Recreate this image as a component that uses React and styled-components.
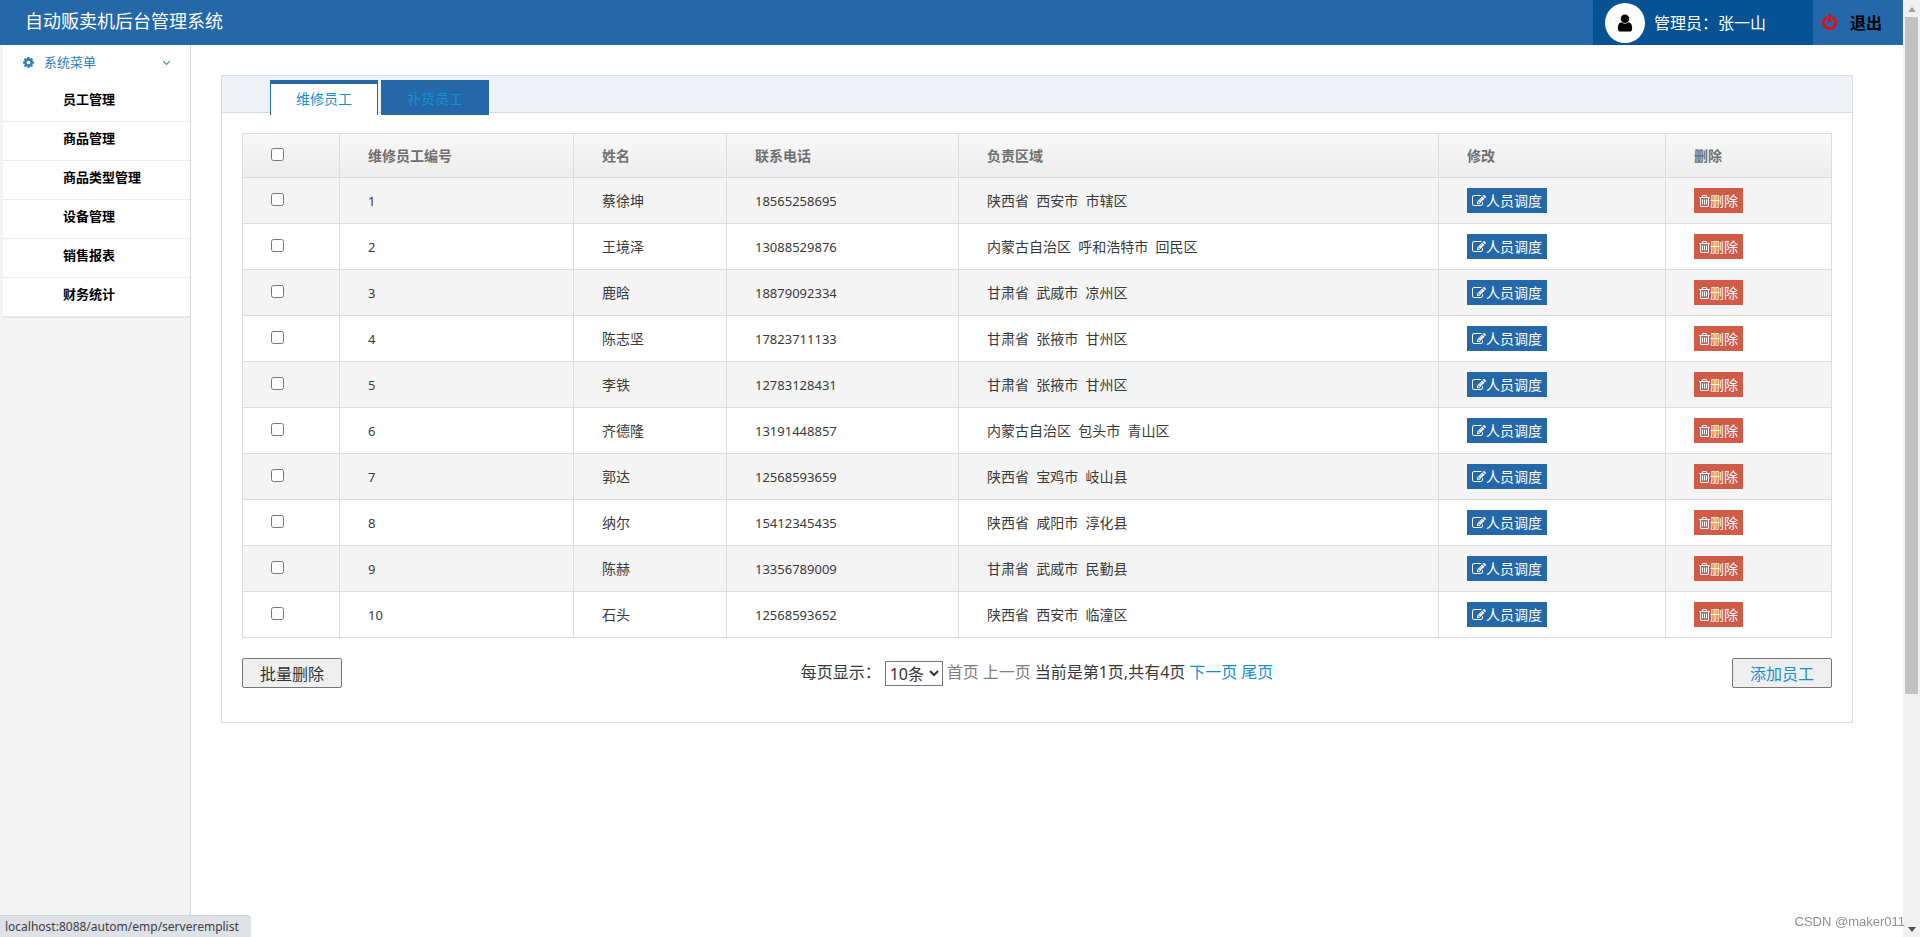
import React, { useState } from 'react';
import styled, { createGlobalStyle } from 'styled-components';

const GlobalStyle = createGlobalStyle`
  *, *::before, *::after {
    box-sizing: border-box;
  }

  body {
    margin: 0;
    background: #fff;
    color: #393939;
    font-family: 'Noto Sans', 'Noto Sans CJK SC', sans-serif;
    font-size: 14px;
    line-height: 20px;
  }

  a {
    text-decoration: none;
  }
`;

const Page = styled.div`
  display: grid;
  grid-template-columns: minmax(0, 1fr) 17px;
  min-height: 100vh;
`;

const Shell = styled.div`
  display: flex;
  flex-direction: column;
`;

/* ---------- header ---------- */

const Header = styled.header`
  display: flex;
  justify-content: space-between;
  height: 45px;
  background: #2468a9;
`;

const Brand = styled.h1`
  margin: 0;
  padding-left: 25px;
  color: #fff;
  font-size: 18px;
  font-weight: 400;
  line-height: 42px;
`;

const HeaderRight = styled.div`
  display: flex;
`;

const Admin = styled.div`
  display: flex;
  align-items: center;
  gap: 9px;
  width: 220px;
  padding-left: 12px;
  background: #065294;
  color: #fff;
  font-size: 16px;
`;

const Avatar = styled.span`
  display: flex;
  align-items: center;
  justify-content: center;
  width: 40px;
  height: 40px;
  border-radius: 50%;
  background: #fff;
  color: #000;
`;

const Logout = styled.a`
  display: flex;
  align-items: center;
  gap: 12px;
  width: 90px;
  padding-left: 8px;
  color: #000;
  font-size: 16px;
  font-weight: 700;
`;

const Icon = styled.svg`
  flex: none;
  width: ${(p) => p.$w || p.$size}px;
  height: ${(p) => p.$size}px;
  fill: ${(p) => p.$color || 'currentColor'};
`;

/* ---------- sidebar ---------- */

const Body = styled.div`
  display: flex;
  flex: 1;
`;

const Sidebar = styled.nav`
  flex: none;
  width: 191px;
  padding-left: 3px;
  border-right: 1px solid #d9d9d9;
  background: #f4f4f4;
`;

const Menu = styled.div`
  border-bottom: 1px solid #e2e2e2;
  background: #fff;
`;

const MenuTitle = styled.a`
  display: flex;
  align-items: center;
  height: 38px;
  padding: 0 17px 4px 19px;
  color: #2b7dbc;
  font-size: 13px;
`;

const MenuLabel = styled.span`
  flex: 1;
  padding-left: 9px;
`;

const MenuList = styled.ul`
  margin: 0;
  padding: 0;
  list-style: none;
`;

const MenuItem = styled.li`
  border-bottom: 1px dotted #d8d8d8;
`;

const MenuLink = styled.a`
  display: block;
  padding: 6px 0 12px 60px;
  color: #000;
  font-size: 13px;
  font-weight: 700;
`;

/* ---------- content ---------- */

const Content = styled.main`
  flex: 1;
  min-width: 0;
  padding: 30px 50px 30px 30px;
`;

const Panel = styled.section`
  border: 1px solid #dcdcdc;
`;

const TabBar = styled.div`
  display: flex;
  gap: 3px;
  height: 37px;
  padding: 4px 0 0 48px;
  border-bottom: 1px solid #dcdcdc;
  background: #eef2f7;
`;

const Tab = styled.a`
  width: 108px;
  height: 35px;
  border: 1px solid #2468a9;
  border-top-width: 4px;
  border-bottom: 0;
  background: ${(p) => (p.$active ? '#fff' : '#2468a9')};
  color: #148fd6;
  line-height: 30px;
  text-align: center;
`;

const PanelBody = styled.div`
  padding: 20px 20px 34px;
`;

const Table = styled.table`
  width: 100%;
  border-collapse: collapse;
  table-layout: fixed;
`;

const Col = styled.col`
  width: ${(p) => (p.$w ? `${p.$w}px` : 'auto')};
`;

const Th = styled.th`
  height: 44px;
  padding: 0 28px;
  border: 1px solid #dcdcdc;
  color: #707070;
  text-align: left;
`;

const HeadRow = styled.tr`
  background: linear-gradient(to bottom, #f8f8f8, #ececec);
`;

const Row = styled.tr`
  height: 46px;

  &:nth-child(odd) {
    background: #f4f4f4;
  }
`;

const Td = styled.td`
  padding: 0 28px;
  border: 1px solid #dcdcdc;
  font-size: ${(p) => (p.$numeric ? 13 : 14)}px;
  white-space: pre;
`;

const Check = styled.input`
  display: block;
  width: 13px;
  height: 13px;
  margin: 0 0 2px;
`;

const ActionButton = styled.button`
  display: flex;
  align-items: center;
  height: 25px;
  padding: 0 5px;
  border: 0;
  background: ${(p) => (p.$danger ? '#d15b47' : '#2468a9')};
  color: #fff;
  font: inherit;
`;

const Footer = styled.div`
  display: flex;
  align-items: center;
  justify-content: space-between;
  padding-top: 20px;
`;

const FooterButton = styled.button`
  width: 100px;
  height: 30px;
  padding: 0;
  border: 1px solid #767676;
  border-radius: 2px;
  background: #efefef;
  color: ${(p) => (p.$link ? '#148fd6' : '#333')};
  font-family: inherit;
  font-size: 16px;
`;

const Pager = styled.div`
  display: flex;
  align-items: flex-start;
  gap: 4px;
  font-size: 16px;
  line-height: 22px;
`;

const PageSize = styled.select`
  width: 58px;
  height: 25px;
  border: 1px solid #767676;
  background: #fff;
  color: #333;
  font-family: inherit;
  font-size: 16px;
`;

const PageLink = styled.a`
  color: ${(p) => (p.$muted ? '#808080' : '#148fd6')};
`;

/* ---------- window chrome ---------- */

const ScrollRail = styled.div`
  position: sticky;
  top: 0;
  display: flex;
  flex-direction: column;
  align-items: center;
  height: 100vh;
  padding: 7px 2px 5px;
  background: #f1f1f1;
`;

const Arrow = styled.span`
  border: 4px solid transparent;
  border-top: ${(p) => (p.$up ? '0' : '5px solid #505050')};
  border-bottom: ${(p) => (p.$up ? '5px solid #a3a3a3' : '0')};
`;

const ScrollTrack = styled.div`
  flex: 1;
  width: 13px;
  padding: 5px 0 7px;
`;

const ScrollThumb = styled.div`
  height: 75%;
  background: #c1c1c1;
`;

const StatusBubble = styled.div`
  position: fixed;
  left: 0;
  bottom: 0;
  padding: 1px 12px 0 5px;
  border-top: 1px solid #cfd2d6;
  border-top-right-radius: 4px;
  background: #dee1e6;
  color: #3c4043;
  font-size: 12px;
`;

const Watermark = styled.div`
  position: fixed;
  right: 15px;
  bottom: 5px;
  color: #8f8f8f;
  font-family: 'Liberation Sans', sans-serif;
  font-size: 13px;
`;

const paths = {
  user: 'M1536 1399q0 109-62.5 187t-150.5 78h-854q-88 0-150.5-78t-62.5-187q0-85 8.5-160.5t31.5-152 58.5-131 94-89 134.5-34.5q131 128 313 128t313-128q76 0 134.5 34.5t94 89 58.5 131 31.5 152 8.5 160.5zm-256-887q0 159-112.5 271.5t-271.5 112.5-271.5-112.5-112.5-271.5 112.5-271.5 271.5-112.5 271.5 112.5 112.5 271.5z',
  power: 'M1664 896q0 156-61 298t-164 245-245 164-298 61-298-61-245-164-164-245-61-298q0-182 80.5-343t226.5-270q43-32 95.5-25t83.5 50q32 42 24.5 94.5t-49.5 84.5q-98 74-151.5 181t-53.5 228q0 104 40.5 198.5t109.5 163.5 163.5 109.5 198.5 40.5 198.5-40.5 163.5-109.5 109.5-163.5 40.5-198.5q0-121-53.5-228t-151.5-181q-42-32-49.5-84.5t24.5-94.5q31-43 84-50t95 25q146 109 226.5 270t80.5 343zm-640-768v640q0 52-38 90t-90 38-90-38-38-90v-640q0-52 38-90t90-38 90 38 38 90z',
  cog: 'M1152 896q0-106-75-181t-181-75-181 75-75 181 75 181 181 75 181-75 75-181zm512-109v222q0 12-8 23t-20 13l-185 28q-19 54-39 91 35 50 107 138 10 12 10 25t-9 23q-27 37-99 108t-94 71q-12 0-26-9l-138-108q-44 23-91 38-16 136-29 186-7 28-36 28h-222q-14 0-24.5-8.5t-11.5-21.5l-28-184q-49-16-90-37l-141 107q-10 9-25 9-14 0-25-11-126-114-165-168-7-10-7-23 0-12 8-23 15-21 51-66.5t54-70.5q-27-50-41-99l-183-27q-13-2-21-12.5t-8-23.5v-222q0-12 8-23t19-13l186-28q14-46 39-92-40-57-107-138-10-12-10-24 0-10 9-23 26-36 98.5-107.5t94.5-71.5q13 0 26 10l138 107q44-23 91-38 16-136 29-186 7-28 36-28h222q14 0 24.5 8.5t11.5 21.5l28 184q49 16 90 37l142-107q9-9 24-9 13 0 25 10 129 119 165 170 7 8 7 22 0 12-8 23-15 21-51 66.5t-54 70.5q26 50 41 98l183 28q13 2 21 12.5t8 23.5z',
  down: 'M1395 736q0 13-10 23l-466 466q-10 10-23 10t-23-10l-466-466q-10-10-10-23t10-23l50-50q10-10 23-10t23 10l393 393 393-393q10-10 23-10t23 10l50 50q10 10 10 23z',
  edit: 'M888 1184l116-116-152-152-116 116v56h96v96h56zm440-720q-16-16-33 1l-350 350q-17 17-1 33t33-1l350-350q17-17 1-33zm80 594v190q0 119-84.5 203.5t-203.5 84.5h-832q-119 0-203.5-84.5t-84.5-203.5v-832q0-119 84.5-203.5t203.5-84.5h832q63 0 117 25 15 7 18 23 3 17-9 29l-49 49q-14 14-32 8-23-6-45-6h-832q-66 0-113 47t-47 113v832q0 66 47 113t113 47h832q66 0 113-47t47-113v-126q0-13 9-22l64-64q15-15 35-7t20 29zm-96-738l288 288-672 672h-288v-288zm444 132l-92 92-288-288 92-92q28-28 68-28t68 28l152 152q28 28 28 68t-28 68z',
  trash: 'M704 736v576q0 14-9 23t-23 9h-64q-14 0-23-9t-9-23v-576q0-14 9-23t23-9h64q14 0 23 9t9 23zm256 0v576q0 14-9 23t-23 9h-64q-14 0-23-9t-9-23v-576q0-14 9-23t23-9h64q14 0 23 9t9 23zm256 0v576q0 14-9 23t-23 9h-64q-14 0-23-9t-9-23v-576q0-14 9-23t23-9h64q14 0 23 9t9 23zm128 724v-948h-896v948q0 22 7 40.5t14.5 27 10.5 8.5h832q3 0 10.5-8.5t14.5-27 7-40.5zm-672-1076h448l-48-117q-7-9-17-11h-317q-10 2-17 11zm928 32v64q0 14-9 23t-23 9h-96v948q0 83-47 143.5t-113 60.5h-832q-66 0-113-58.5t-47-141.5v-952h-96q-14 0-23-9t-9-23v-64q0-14 9-23t23-9h309l70-167q15-37 54-63t79-26h320q40 0 79 26t54 63l70 167h309q14 0 23 9t9 23z',
};

const Glyph = ({ name, size, w, color, viewBox = '0 0 1792 1792' }) => (
  <Icon $size={size} $w={w} $color={color} viewBox={viewBox} aria-hidden="true">
    <path d={paths[name]} />
  </Icon>
);

const menuItems = ['员工管理', '商品管理', '商品类型管理', '设备管理', '销售报表', '财务统计'];

const columns = [97, 234, 153, 232, null, 227, 166];

const employees = [
  { id: 1, name: '蔡徐坤', phone: '18565258695', area: ['陕西省', '西安市', '市辖区'] },
  { id: 2, name: '王境泽', phone: '13088529876', area: ['内蒙古自治区', '呼和浩特市', '回民区'] },
  { id: 3, name: '鹿晗', phone: '18879092334', area: ['甘肃省', '武威市', '凉州区'] },
  { id: 4, name: '陈志坚', phone: '17823711133', area: ['甘肃省', '张掖市', '甘州区'] },
  { id: 5, name: '李铁', phone: '12783128431', area: ['甘肃省', '张掖市', '甘州区'] },
  { id: 6, name: '齐德隆', phone: '13191448857', area: ['内蒙古自治区', '包头市', '青山区'] },
  { id: 7, name: '郭达', phone: '12568593659', area: ['陕西省', '宝鸡市', '岐山县'] },
  { id: 8, name: '纳尔', phone: '15412345435', area: ['陕西省', '咸阳市', '淳化县'] },
  { id: 9, name: '陈赫', phone: '13356789009', area: ['甘肃省', '武威市', '民勤县'] },
  { id: 10, name: '石头', phone: '12568593652', area: ['陕西省', '西安市', '临潼区'] },
];

const EmployeeTable = () => {
  const [selected, setSelected] = useState([]);
  const allSelected = selected.length === employees.length;

  const toggle = (id) =>
    setSelected((ids) => (ids.includes(id) ? ids.filter((i) => i !== id) : [...ids, id]));

  return (
    <Table>
      <colgroup>
        {columns.map((w, i) => (
          <Col key={i} $w={w} />
        ))}
      </colgroup>
      <thead>
        <HeadRow>
          <Th>
            <Check
              type="checkbox"
              aria-label="全选"
              checked={allSelected}
              onChange={() => setSelected(allSelected ? [] : employees.map((e) => e.id))}
            />
          </Th>
          <Th>维修员工编号</Th>
          <Th>姓名</Th>
          <Th>联系电话</Th>
          <Th>负责区域</Th>
          <Th>修改</Th>
          <Th>删除</Th>
        </HeadRow>
      </thead>
      <tbody>
        {employees.map((e) => (
          <Row key={e.id}>
            <Td>
              <Check
                type="checkbox"
                aria-label={e.name}
                checked={selected.includes(e.id)}
                onChange={() => toggle(e.id)}
              />
            </Td>
            <Td $numeric>{e.id}</Td>
            <Td>{e.name}</Td>
            <Td $numeric>{e.phone}</Td>
            <Td>{e.area.join('  ')}</Td>
            <Td>
              <ActionButton type="button">
                <Glyph name="edit" size={14} />
                人员调度
              </ActionButton>
            </Td>
            <Td>
              <ActionButton type="button" $danger>
                <Glyph name="trash" size={14} w={11} viewBox="192 0 1408 1792" />
                删除
              </ActionButton>
            </Td>
          </Row>
        ))}
      </tbody>
    </Table>
  );
};

const App = () => {
  return (
    <>
      <GlobalStyle />
      <Page>
        <Shell>
          <Header>
            <Brand>自动贩卖机后台管理系统</Brand>
            <HeaderRight>
              <Admin>
                <Avatar>
                  <Glyph name="user" size={20} />
                </Avatar>
                管理员：张一山
              </Admin>
              <Logout href="#logout">
                <Glyph name="power" size={17} color="#f00" />
                退出
              </Logout>
            </HeaderRight>
          </Header>
          <Body>
            <Sidebar>
              <Menu>
                <MenuTitle href="#menu">
                  <Glyph name="cog" size={13} />
                  <MenuLabel>系统菜单</MenuLabel>
                  <Glyph name="down" size={13} />
                </MenuTitle>
                <MenuList>
                  {menuItems.map((item) => (
                    <MenuItem key={item}>
                      <MenuLink href="#page">{item}</MenuLink>
                    </MenuItem>
                  ))}
                </MenuList>
              </Menu>
            </Sidebar>
            <Content>
              <Panel>
                <TabBar>
                  <Tab href="#repair" $active>维修员工</Tab>
                  <Tab href="#restock">补货员工</Tab>
                </TabBar>
                <PanelBody>
                  <EmployeeTable />
                  <Footer>
                    <FooterButton type="button">批量删除</FooterButton>
                    <Pager>
                      <label htmlFor="page-size">每页显示：</label>
                      <PageSize id="page-size" defaultValue="10">
                        <option value="10">10条</option>
                        <option value="20">20条</option>
                      </PageSize>
                      <PageLink href="#first" $muted>首页</PageLink>
                      <PageLink href="#prev" $muted>上一页</PageLink>
                      <span>当前是第1页,共有4页</span>
                      <PageLink href="#next">下一页</PageLink>
                      <PageLink href="#last">尾页</PageLink>
                    </Pager>
                    <FooterButton type="button" $link>添加员工</FooterButton>
                  </Footer>
                </PanelBody>
              </Panel>
            </Content>
          </Body>
        </Shell>
        <ScrollRail>
          <Arrow $up />
          <ScrollTrack>
            <ScrollThumb />
          </ScrollTrack>
          <Arrow />
        </ScrollRail>
      </Page>
      <StatusBubble>localhost:8088/autom/emp/serveremplist</StatusBubble>
      <Watermark>CSDN @maker011</Watermark>
    </>
  );
};

export default App;
